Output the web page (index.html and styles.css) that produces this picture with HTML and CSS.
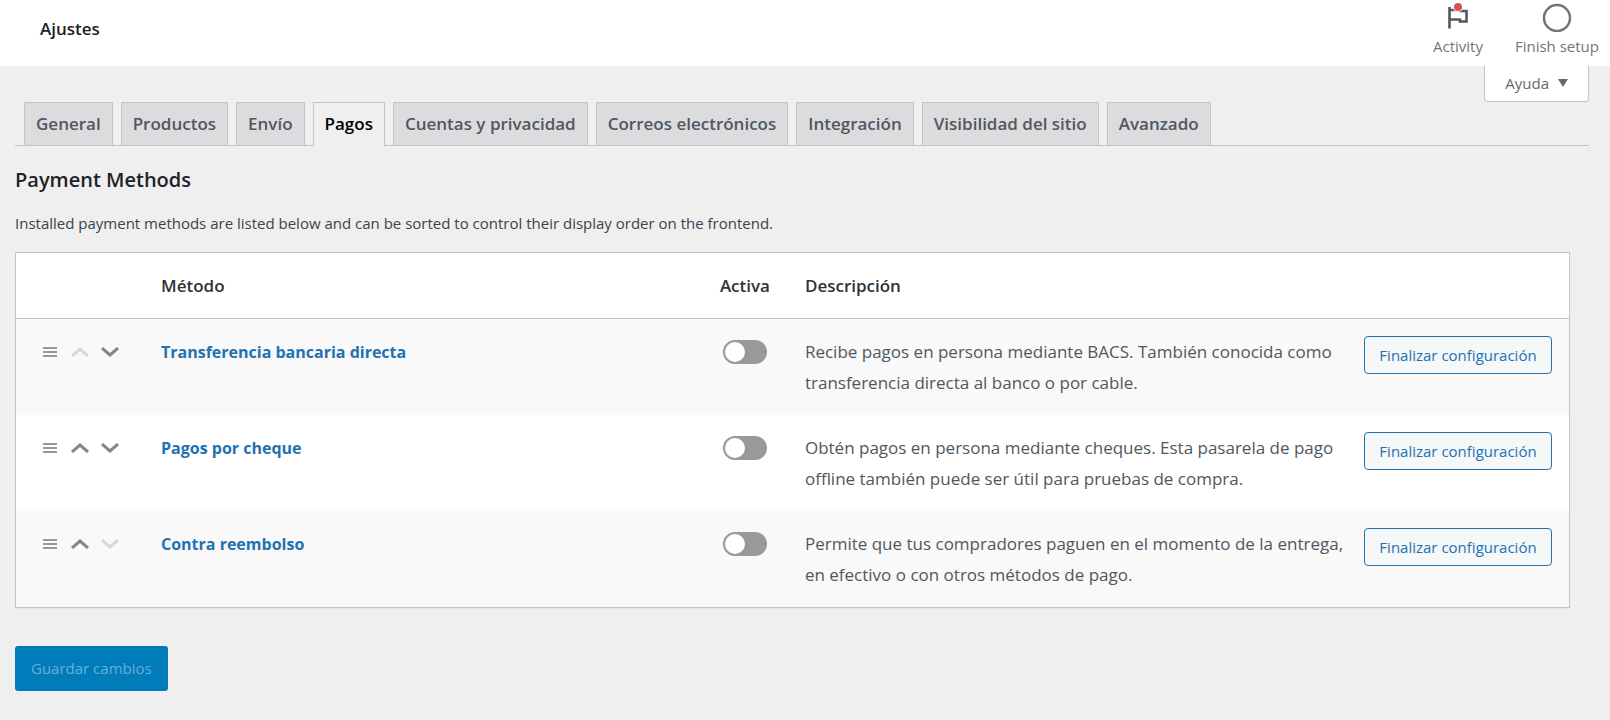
FILE: index.html
```html
<!DOCTYPE html>
<html lang="es">
<head>
  <meta charset="UTF-8" />
  <meta name="viewport" content="width=device-width, initial-scale=1.0"/>
  <title>Ajustes</title>
  <link rel="stylesheet" href="styles.css">
</head>
<body>
  <header class="topbar">
    <h1>Ajustes</h1>
    <div class="activity-panel">
      <button type="button" class="panel-tab">
        <svg width="28" height="32" viewBox="0 0 28 32">
          <path d="M5.500 7v21.500M5.500 10h9M5.500 19.500h10.500M15 11h7.500v10.500h-6.500v-3" fill="none" stroke="#50575e" stroke-width="2.600"/>
          <circle cx="14" cy="7" r="5" fill="#fff"/>
          <circle cx="14" cy="7" r="4" fill="#d94f4f"/>
        </svg>
        Activity
      </button>
      <button type="button" class="panel-tab">
        <svg width="32" height="32" viewBox="0 0 32 32">
          <circle cx="16" cy="18" r="13" fill="#fff" stroke="#757575" stroke-width="2.500"/>
        </svg>
        Finish setup
      </button>
    </div>
  </header>

  <main class="wrap">
    <div class="help">
      <button type="button" class="help-link">Ayuda <span class="arrow"></span></button>
    </div>

    <nav class="tabs">
      <a href="#" class="tab">General</a>
      <a href="#" class="tab">Productos</a>
      <a href="#" class="tab">Envío</a>
      <a href="#" class="tab active">Pagos</a>
      <a href="#" class="tab">Cuentas y privacidad</a>
      <a href="#" class="tab">Correos electrónicos</a>
      <a href="#" class="tab">Integración</a>
      <a href="#" class="tab">Visibilidad del sitio</a>
      <a href="#" class="tab">Avanzado</a>
    </nav>

    <form class="settings">
      <h2>Payment Methods</h2>
      <p class="intro">Installed payment methods are listed below and can be sorted to control their display order on the frontend.</p>

      <table class="gateways">
        <thead>
          <tr>
            <th class="sort"></th>
            <th class="name">Método</th>
            <th class="status">Activa</th>
            <th class="description">Descripción</th>
            <th class="action"></th>
          </tr>
        </thead>
        <tbody>
          <tr>
            <td class="sort">
              <div class="sort-items">
                <svg class="handle" width="14" height="10" viewBox="0 0 14 10"><path d="M0 1h14M0 5h14M0 9h14"/></svg>
                <button type="button" class="move" aria-label="Subir" disabled><svg width="18" height="10" viewBox="0 0 18 10"><path d="M1 9l8-7 8 7"/></svg></button>
                <button type="button" class="move" aria-label="Bajar"><svg width="18" height="10" viewBox="0 0 18 10"><path d="M1 1l8 7 8-7"/></svg></button>
              </div>
            </td>
            <td class="name"><a href="#" id="bacs">Transferencia bancaria directa</a></td>
            <td class="status"><input type="checkbox" class="toggle" aria-labelledby="bacs"></td>
            <td class="description">Recibe pagos en persona mediante BACS. También conocida como transferencia directa al banco o por cable.</td>
            <td class="action"><a href="#" class="button">Finalizar configuración</a></td>
          </tr>
          <tr>
            <td class="sort">
              <div class="sort-items">
                <svg class="handle" width="14" height="10" viewBox="0 0 14 10"><path d="M0 1h14M0 5h14M0 9h14"/></svg>
                <button type="button" class="move" aria-label="Subir"><svg width="18" height="10" viewBox="0 0 18 10"><path d="M1 9l8-7 8 7"/></svg></button>
                <button type="button" class="move" aria-label="Bajar"><svg width="18" height="10" viewBox="0 0 18 10"><path d="M1 1l8 7 8-7"/></svg></button>
              </div>
            </td>
            <td class="name"><a href="#" id="cheque">Pagos por cheque</a></td>
            <td class="status"><input type="checkbox" class="toggle" aria-labelledby="cheque"></td>
            <td class="description">Obtén pagos en persona mediante cheques. Esta pasarela de pago offline también puede ser útil para pruebas de compra.</td>
            <td class="action"><a href="#" class="button">Finalizar configuración</a></td>
          </tr>
          <tr>
            <td class="sort">
              <div class="sort-items">
                <svg class="handle" width="14" height="10" viewBox="0 0 14 10"><path d="M0 1h14M0 5h14M0 9h14"/></svg>
                <button type="button" class="move" aria-label="Subir"><svg width="18" height="10" viewBox="0 0 18 10"><path d="M1 9l8-7 8 7"/></svg></button>
                <button type="button" class="move" aria-label="Bajar" disabled><svg width="18" height="10" viewBox="0 0 18 10"><path d="M1 1l8 7 8-7"/></svg></button>
              </div>
            </td>
            <td class="name"><a href="#" id="cod">Contra reembolso</a></td>
            <td class="status"><input type="checkbox" class="toggle" aria-labelledby="cod"></td>
            <td class="description">Permite que tus compradores paguen en el momento de la entrega, en efectivo o con otros métodos de pago.</td>
            <td class="action"><a href="#" class="button">Finalizar configuración</a></td>
          </tr>
        </tbody>
      </table>

      <button type="submit" class="save" disabled>Guardar cambios</button>
    </form>
  </main>
</body>
</html>
```
FILE: styles.css
```css
* {
  box-sizing: border-box;
}

body {
  margin: 0;
  background: #efefef;
  color: #3c434a;
  font-family: 'Segoe UI', 'Open Sans', 'Noto Sans', sans-serif;
  font-size: 15px;
}

button {
  font-family: inherit;
  cursor: pointer;
}

.topbar {
  display: flex;
  justify-content: space-between;
  height: 66px;
  padding: 0 8px 0 40px;
  background: #fff;
}

.topbar h1 {
  margin: 0;
  font-size: 17px;
  font-weight: 600;
  line-height: 58px;
  color: #1e1e1e;
}

.activity-panel {
  display: flex;
  align-items: flex-start;
  gap: 26px;
}

.panel-tab {
  display: flex;
  flex-direction: column;
  align-items: center;
  padding: 0 3px;
  border: none;
  background: none;
  color: #757575;
  font-size: 15px;
  line-height: 28px;
}

.wrap {
  margin: 0 21px 0 15px;
}

.help {
  display: flex;
  justify-content: flex-end;
}

.help-link {
  display: flex;
  align-items: center;
  gap: 9px;
  height: 36px;
  padding: 0 20px 2px;
  border: 1px solid #c3c4c7;
  border-top: none;
  border-radius: 0 0 4px 4px;
  background: #fff;
  color: #646970;
  font-size: 15px;
}

.arrow {
  border: 5px solid transparent;
  border-top: 8px solid #646970;
  border-bottom: none;
}

.tabs {
  display: flex;
  gap: 8px;
  padding-left: 9px;
  border-bottom: 1px solid #c3c4c7;
}

.tab {
  padding: 0 11px;
  border: 1px solid #c3c4c7;
  border-bottom: none;
  background: #dcdcde;
  color: #50575e;
  font-size: 17px;
  font-weight: 600;
  line-height: 42px;
  text-decoration: none;
  white-space: nowrap;
}

.tab.active {
  margin-bottom: -1px;
  background: #efefef;
  color: #000;
}

.settings {
  padding-right: 19px;
}

h2 {
  margin: 20px 0 17px;
  color: #1d2327;
  font-size: 20px;
  font-weight: 600;
  line-height: 28px;
}

.intro {
  margin: 0 0 17px;
  line-height: 24px;
}

.gateways {
  width: 100%;
  border: 1px solid #c3c4c7;
  border-spacing: 0;
  background: #fff;
  box-shadow: 0 1px 1px rgba(0, 0, 0, 0.04);
  table-layout: fixed;
}

.gateways th {
  padding: 17px 15px;
  border-bottom: 1px solid #c3c4c7;
  color: #2c3338;
  font-size: 17px;
  font-weight: 600;
  line-height: 31px;
  text-align: left;
}

.gateways td {
  padding: 17px 15px;
  color: #50575e;
  font-size: 17px;
  line-height: 31px;
  vertical-align: top;
}

.gateways tbody tr:nth-child(odd) {
  background: #f9f9f9;
}

.gateways .sort {
  width: 130px;
  padding-left: 27px;
}

.gateways .status {
  width: 90px;
  text-align: center;
}

.gateways .description {
  width: 36%;
  padding-right: 0;
}

.gateways .action {
  width: 220px;
  padding-right: 17px;
}

.sort-items {
  display: flex;
  align-items: center;
  gap: 12px;
  height: 31px;
}

.sort-items svg {
  display: block;
  fill: none;
}

.sort-items .handle {
  margin-right: 2px;
  stroke: #999;
  stroke-width: 2;
}

.move {
  padding: 0;
  border: none;
  background: none;
}

.move svg {
  stroke: #82878c;
  stroke-width: 3;
}

.move:disabled svg {
  stroke: #d8d8d8;
}

.gateways .name a {
  color: #2271b1;
  font-size: 16px;
  font-weight: 700;
  text-decoration: none;
}

.toggle {
  display: block;
  width: 44px;
  height: 24px;
  margin: 4px auto;
  padding: 2px;
  border-radius: 12px;
  background: #999;
  appearance: none;
  cursor: pointer;
}

.toggle::before {
  content: '';
  display: block;
  width: 20px;
  height: 20px;
  border-radius: 50%;
  background: #fff;
}

.toggle:checked {
  background: #2271b1;
}

.toggle:checked::before {
  margin-left: auto;
}

.button {
  display: block;
  border: 1px solid #2271b1;
  border-radius: 4px;
  background: #f6f7f7;
  color: #2271b1;
  font-size: 15px;
  line-height: 36px;
  text-align: center;
  text-decoration: none;
  white-space: nowrap;
}

.save {
  margin-top: 38px;
  padding: 0 16px;
  border: none;
  border-radius: 3px;
  background: #007cba;
  color: #66b0d6;
  font-size: 15px;
  line-height: 45px;
}
```
